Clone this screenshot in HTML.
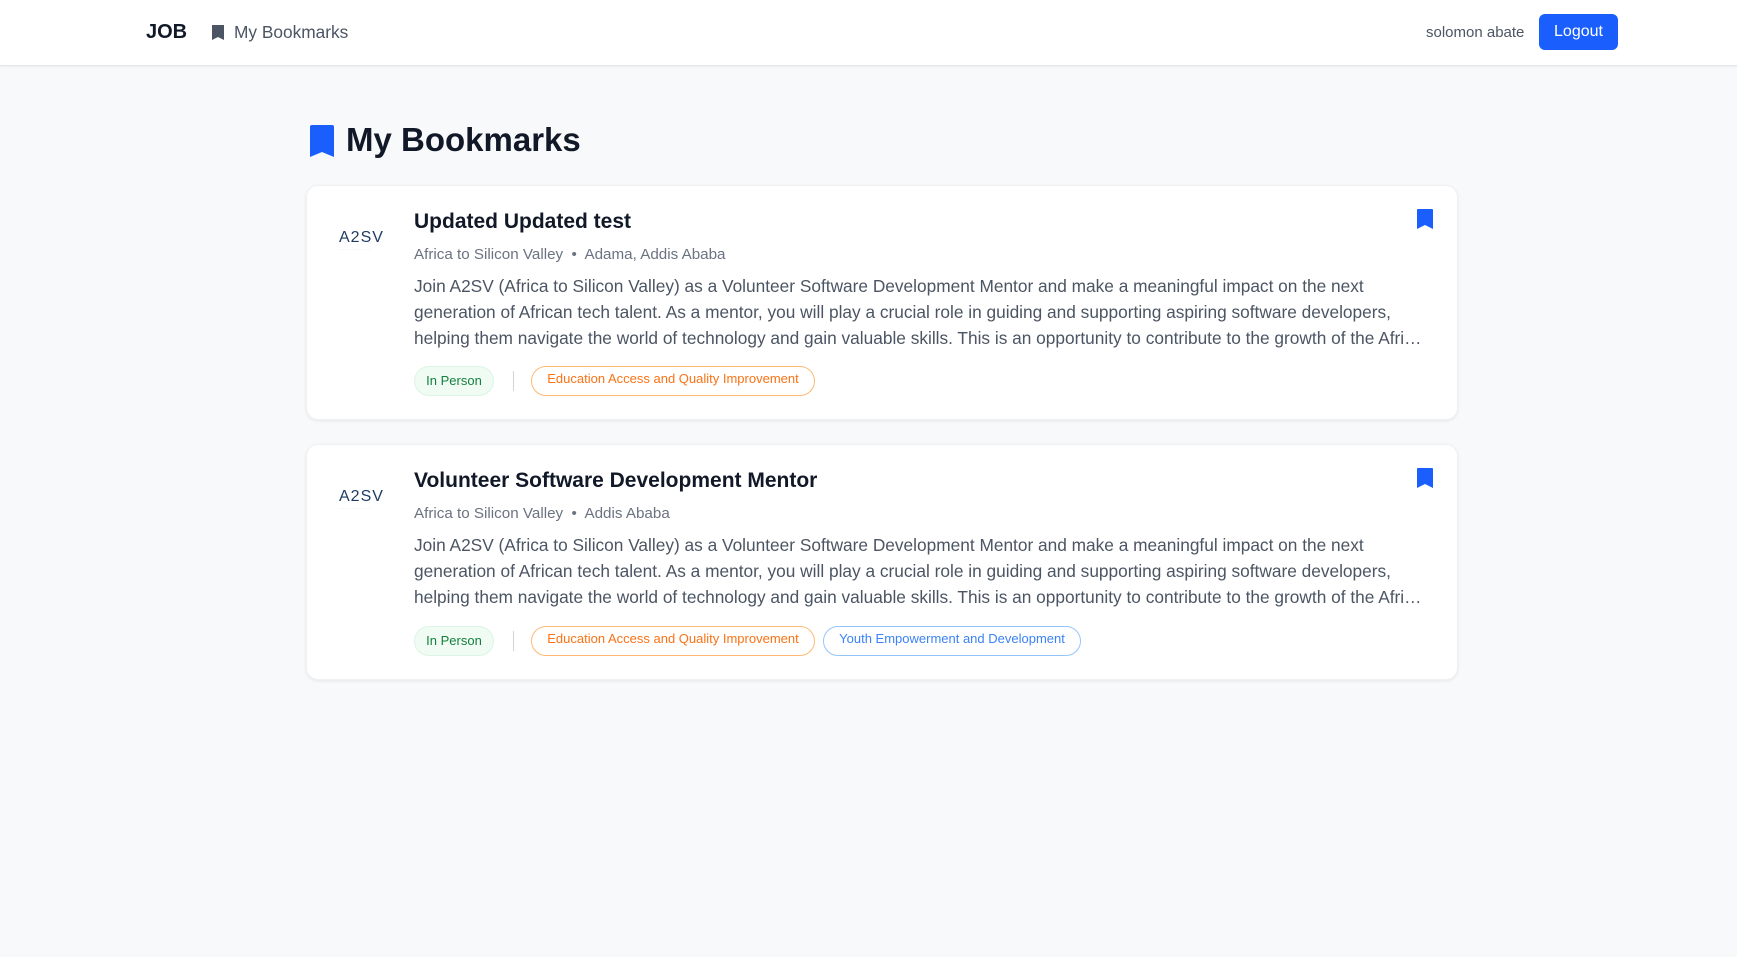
<!DOCTYPE html>
<html><head><meta charset="utf-8"><style>
*{margin:0;padding:0;box-sizing:border-box}
body{width:1737px;height:957px;background:#f8f9fb;font-family:"Liberation Sans",Arial,sans-serif;position:relative;overflow:hidden}
.nav{position:absolute;left:0;top:0;width:1737px;height:66px;background:#fff;border-bottom:1px solid #e3e5e8;box-shadow:0 1px 2px rgba(0,0,0,.05)}
.abs{position:absolute;white-space:nowrap}
.card{position:absolute;left:306px;width:1152px;background:#fff;border-radius:12px;box-shadow:0 1px 3px rgba(0,0,0,.08);border:1px solid #f0f1f3}
.title{position:absolute;left:107px;font-size:21px;font-weight:bold;color:#111827}
.meta{position:absolute;left:107px;font-size:15.2px;color:#6b7280;white-space:nowrap}
.desc{position:absolute;left:107px;width:1016px;font-size:17.3px;line-height:26px;color:#4b5563}
.desc div{white-space:nowrap;overflow:hidden;text-overflow:ellipsis}
.tag{position:absolute;height:30px;border-radius:15px;font-size:13px;line-height:28px;text-align:center;white-space:nowrap}
.ip{background:#effbf3;border:1px solid #dcf5e4;color:#15803d}
.or{border:1px solid #fdba74;color:#f97316;line-height:24px}
.bl{border:1px solid #93c5fd;color:#3b82f6;line-height:24px}
.sep{position:absolute;width:1px;height:20px;background:#d1d5db}
.logo{position:absolute;left:32px;font-size:16px;color:#1e3a5f;letter-spacing:1px}
</style></head><body>
<div class="nav">
 <div class="abs" style="left:146px;top:21px;font-size:20px;font-weight:bold;color:#111827">JOB</div>
 <svg class="abs" style="left:211px;top:24px" width="14" height="17" viewBox="0 0 14 17"><path d="M1 1h12v15l-6-3-6 3z" fill="#4b5563"/></svg>
 <div class="abs" style="left:234px;top:22px;font-size:17.3px;color:#4b5563">My Bookmarks</div>
 <div class="abs" style="left:1426px;top:24px;font-size:15px;color:#4b5563">solomon abate</div>
 <div class="abs" style="left:1539px;top:14px;width:79px;height:36px;background:#1a5ffd;border-radius:6px;color:#fff;font-size:16px;text-align:center;line-height:36px">Logout</div>
</div>
<svg class="abs" style="left:310px;top:125px" width="24" height="32" viewBox="0 0 24 32"><path d="M0 2q0-2 2-2h20q2 0 2 2v30l-12-5-12 5z" fill="#1a5ffd"/></svg>
<div class="abs" style="left:346px;top:121px;font-size:33px;font-weight:bold;color:#111827">My Bookmarks</div>

<div class="card" style="top:185px;height:235px">
 <div class="logo" style="top:43px">A2SV<div style="font-size:3px;letter-spacing:1px;color:#3b82a0">..................</div></div>
 <div class="title" style="top:24px">Updated Updated test</div>
 <svg class="abs" style="left:1110px;top:23px" width="16" height="20" viewBox="0 0 16 20"><path d="M0 1q0-1 1-1h14q1 0 1 1v19l-8-4-8 4z" fill="#1a5ffd"/></svg>
 <div class="meta" style="top:60px">Africa to Silicon Valley &nbsp;•&nbsp; Adama, Addis Ababa</div>
 <div class="desc" style="top:87px"><div>Join A2SV (Africa to Silicon Valley) as a Volunteer Software Development Mentor and make a meaningful impact on the next</div><div>generation of African tech talent. As a mentor, you will play a crucial role in guiding and supporting aspiring software developers,</div><div>helping them navigate the world of technology and gain valuable skills. This is an opportunity to contribute to the growth of the African tech ecosystem</div></div>
 <div class="tag ip" style="left:107px;top:180px;width:80px">In Person</div>
 <div class="sep" style="left:206px;top:185px"></div>
 <div class="tag or" style="left:224px;top:180px;width:284px">Education Access and Quality Improvement</div>
</div>

<div class="card" style="top:444px;height:236px">
 <div class="logo" style="top:43px">A2SV<div style="font-size:3px;letter-spacing:1px;color:#3b82a0">..................</div></div>
 <div class="title" style="top:24px">Volunteer Software Development Mentor</div>
 <svg class="abs" style="left:1110px;top:23px" width="16" height="20" viewBox="0 0 16 20"><path d="M0 1q0-1 1-1h14q1 0 1 1v19l-8-4-8 4z" fill="#1a5ffd"/></svg>
 <div class="meta" style="top:60px">Africa to Silicon Valley &nbsp;•&nbsp; Addis Ababa</div>
 <div class="desc" style="top:87px"><div>Join A2SV (Africa to Silicon Valley) as a Volunteer Software Development Mentor and make a meaningful impact on the next</div><div>generation of African tech talent. As a mentor, you will play a crucial role in guiding and supporting aspiring software developers,</div><div>helping them navigate the world of technology and gain valuable skills. This is an opportunity to contribute to the growth of the African tech ecosystem</div></div>
 <div class="tag ip" style="left:107px;top:181px;width:80px">In Person</div>
 <div class="sep" style="left:206px;top:186px"></div>
 <div class="tag or" style="left:224px;top:181px;width:284px">Education Access and Quality Improvement</div>
 <div class="tag bl" style="left:516px;top:181px;width:258px">Youth Empowerment and Development</div>
</div>
</body></html>
